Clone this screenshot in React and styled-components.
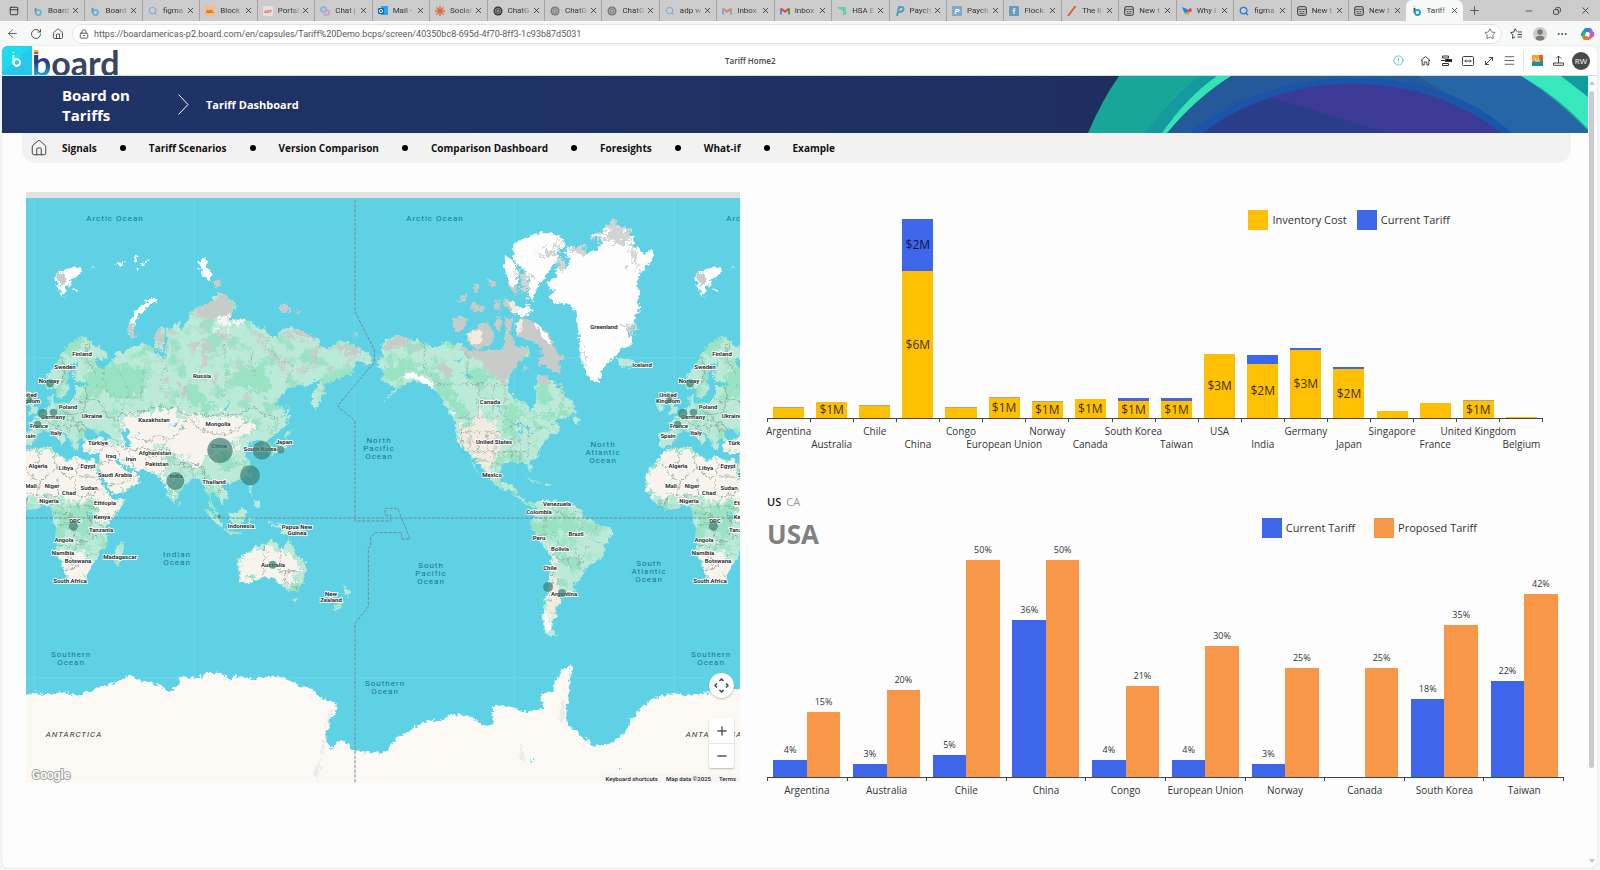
import styled, { createGlobalStyle, css } from "styled-components"
import {
  ArrowLeft, RotateCw, House, Star, LockKeyhole, Ellipsis, Menu, MoveDiagonal, Upload,
  Plus, Minus, X, Copy, CircleAlert, PanelTop, Newspaper, Search,
} from "lucide-react"

const yellow = "#ffc003"
const blue = "#3e66ea"
const orange = "#f89747"
const sea = "#5fd1e5"

const GlobalStyle = createGlobalStyle`
  * { box-sizing: border-box; }
  body {
    margin: 0;
    background: #f4f5f5;
    font-family: "Open Sans", "Noto Sans", sans-serif;
    color: #333;
  }
  button { font: inherit; color: inherit; background: none; border: 0; padding: 0; }
  a { color: inherit; text-decoration: none; }
  ul { list-style: none; margin: 0; padding: 0; }
`

const Page = styled.div`
  display: flex;
  flex-direction: column;
  min-height: 100vh;
`

/* browser chrome */

const TabStrip = styled.div`
  display: flex;
  align-items: stretch;
  height: 21px;
  background: #cccccc;
`

const TabActions = styled.div`
  width: 27px;
  display: flex;
  align-items: center;
  justify-content: center;
`

const TabList = styled.ul`
  flex: 1;
  display: flex;
  min-width: 0;
`

const Tab = styled.li`
  flex: 1 1 0;
  min-width: 0;
  display: flex;
  align-items: center;
  padding: 0 4px 0 5px;
  border-left: 1px solid ${props => props.$active ? "transparent" : "#a3a3a3"};
  background-clip: padding-box;
  font: 8px/12px Roboto, "Open Sans", sans-serif;
  color: #333;

  ${props => props.$active && css`
    background: #f7f8f8;
    border-radius: 6px 6px 0 0;
  `}

  & > svg { flex: none; }
`

const TabName = styled.span`
  flex: 1;
  margin: 0 2px 0 5px;
  white-space: nowrap;
  mask-image: linear-gradient(to right, #000 60%, rgba(0, 0, 0, 0.2));
`

const IconButton = styled.button`
  display: inline-flex;
  align-items: center;
  justify-content: center;
  width: ${props => props.$w || 22}px;
  height: 20px;
  flex: none;
  color: #444;
`

const CloseButton = styled.button`
  display: flex;
  color: #222;
`

const WindowControls = styled.div`
  width: 137px;
  display: flex;
  align-items: center;
  justify-content: space-between;
`

const WindowButtons = styled.div`
  display: flex;
  padding-right: 1px;
`

const Toolbar = styled.div`
  display: flex;
  align-items: center;
  height: 25px;
  padding-left: 1px;
  background: #f7f8f8;
`

const AddressBar = styled.div`
  flex: 1;
  display: flex;
  align-items: center;
  height: 20px;
  margin-left: 3px;
  border: 1px solid #dfe3e3;
  border-radius: 10px;
  background: #fff;
`

const AddressInput = styled.input`
  flex: 1;
  min-width: 0;
  border: 0;
  padding: 0;
  outline: none;
  background: none;
  font: 9px/14px Roboto, "Open Sans", sans-serif;
  color: #5a5a5a;
`

/* app frame */

const AppFrame = styled.div`
  flex: 1;
  display: flex;
  flex-direction: column;
  margin: 0 3px 2px 2px;
  border-radius: 6px;
  overflow: hidden;
  background: #fdfdfd;
  box-shadow: 0 0 1px #aaa;
`

const AppBar = styled.header`
  display: flex;
  align-items: center;
  justify-content: space-between;
  height: 30px;
  background: #fff;
  border-bottom: 1px solid #bfe6f5;
`

const Brand = styled.div`
  display: flex;
  align-items: flex-start;
  height: 29px;
  overflow: hidden;
`

const BrandName = styled.a`
  font: 700 34px/34px Lato, "Open Sans", sans-serif;
  color: #3a4560;
`

const BrandLetter = styled.span`
  color: transparent;
  background: linear-gradient(#e5b62e 24%, #d8443c 24% 29%, #fff 29% 32%, #273b82 32% 50%, #1fa3e0 80%);
  background-clip: text;
`

const ScreenName = styled.h1`
  margin: 0;
  font-size: 8px;
  font-weight: 600;
  line-height: 12px;
  color: #444;
`

const AppTools = styled.div`
  display: flex;
  align-items: center;
  padding-right: 7px;
`

const Divider = styled.span`
  width: 1px;
  height: 20px;
  margin: 0 3px;
  background: #e3e3e3;
`

const Avatar = styled.button`
  width: 18px;
  height: 18px;
  margin-left: 3px;
  border-radius: 50%;
  background: #484848;
  color: #fff;
  font-size: 8px;
  line-height: 18px;
`

const Scroller = styled.div`
  flex: 1;
  display: flex;
`

const Screen = styled.div`
  flex: 1;
  min-width: 0;
`

const Scrollbar = styled.div`
  width: 9px;
  display: flex;
  flex-direction: column;
  align-items: center;
  padding: 5px 2px 5px 0;
`

const ScrollThumb = styled.div`
  width: 5px;
  height: 677px;
  margin: 6px 0 auto;
  border-radius: 3px;
  background: #cbcbcb;
`

const Banner = styled.div`
  display: flex;
  align-items: center;
  height: 57px;
  padding-left: 60px;
  background: linear-gradient(to right, #1f3367, #1f3163 50%, #1b2a5a);
  color: #fff;
`

const BannerTitle = styled.h2`
  width: 116px;
  margin: 0;
  padding-right: 40px;
  font-size: 15px;
  line-height: 20px;
`

const BannerPage = styled.h3`
  margin: 0 0 0 17px;
  font-size: 11px;
  line-height: 16px;
`

const BannerArt = styled.svg`
  height: 57px;
  margin-left: auto;
`

const Nav = styled.nav`
  display: flex;
  align-items: center;
  height: 30px;
  margin: 0 17px 0 20px;
  padding-left: 8px;
  border-radius: 0 0 14px 14px;
  background: #f2f2f2;
`

const NavList = styled.ul`
  display: flex;
  align-items: center;
  gap: 23px;
  margin-left: 14px;
`

const NavItem = styled.li`
  display: flex;
  align-items: center;
  gap: 23px;
  font-size: 10px;
  font-weight: 700;
  line-height: 16px;
  color: #111;

  & + &::before {
    content: "";
    width: 6px;
    height: 6px;
    border-radius: 50%;
    background: #000;
  }
`

const Content = styled.main`
  display: grid;
  grid-template-columns: minmax(0, 714fr) minmax(0, 797fr);
  gap: 27px;
  padding: 29px 24px 20px 24px;
`

/* map */

const MapPanel = styled.section`
  position: relative;
  height: 591px;
  border-top: 6px solid #e2e2de;
  background: ${sea};
  overflow: hidden;
`

const MapSvg = styled.svg`
  display: block;
  width: 100%;
  height: 100%;
  font-family: Roboto, "Liberation Sans", sans-serif;
`

const PlaceText = styled.text`
  font-size: 6px;
  font-weight: 600;
  text-anchor: middle;
  fill: #222;
  stroke: rgba(255, 255, 255, 0.85);
  stroke-width: 2px;
  paint-order: stroke;
`

const OceanText = styled.text`
  font-size: 8px;
  text-anchor: middle;
  letter-spacing: 1px;
  fill: ${props => props.$land ? "#333" : "#17778f"};
`

const MapControls = styled.div`
  position: absolute;
  right: 6px;
  bottom: 15px;
  display: flex;
  flex-direction: column;
  gap: 20px;
`

const RoundControl = styled.button`
  width: 25px;
  height: 25px;
  display: flex;
  align-items: center;
  justify-content: center;
  border-radius: 50%;
  background: #fff;
  box-shadow: 0 1px 2px rgba(0, 0, 0, 0.25);
`

const ZoomControl = styled.div`
  width: 25px;
  border-radius: 2px;
  background: #fff;
  box-shadow: 0 1px 2px rgba(0, 0, 0, 0.25);
`

const ZoomButton = styled.button`
  width: 100%;
  height: 25px;
  display: flex;
  align-items: center;
  justify-content: center;
  color: #555;

  & + & { border-top: 1px solid #e6e6e6; }
`

const MapFooter = styled.div`
  position: absolute;
  right: 0;
  bottom: 0;
  display: flex;
  gap: 8px;
  padding: 0 4px;
  background: #f7f6f5;
  font: 500 6px/9px Roboto, sans-serif;
  color: #222;
`

const GoogleMark = styled.span`
  position: absolute;
  left: 6px;
  bottom: 0;
  font: 500 12px/16px Roboto, sans-serif;
  color: #fff;
  -webkit-text-stroke: 2px #a5a5a5;
  paint-order: stroke fill;
`

/* charts */

const Charts = styled.div`
  display: flex;
  flex-direction: column;
  gap: 43px;
`

const ChartSection = styled.section`
  padding-right: ${props => props.$right || 0}px;
`

const ChartArea = styled.div`
  display: grid;
  grid-template: 100% / 100%;
  height: ${props => props.$height}px;

  & > * { grid-area: 1 / 1; }
`

const Plot = styled.div`
  align-self: end;
  display: flex;
  align-items: flex-end;
  border-bottom: 1px solid #444;
`

const Column = styled.div`
  flex: 1;
  min-width: 0;
  display: flex;
  align-items: flex-end;
  justify-content: center;
`

const Stack = styled.div`
  width: 72%;
  display: flex;
  flex-direction: column;
`

const Segment = styled.div`
  display: flex;
  align-items: center;
  justify-content: center;
  background: ${props => props.$color};
  font-size: 12px;
  line-height: 14px;
  color: rgba(0, 0, 0, 0.8);
`

const Series = styled.div`
  width: 42%;
  display: flex;
  flex-direction: column;
  align-items: center;
  font-size: 9px;
  line-height: 12px;
  color: #333;
`

const Bar = styled.div`
  width: 100%;
  margin-top: 4px;
  background: ${props => props.$color};
`

const Axis = styled.div`
  display: flex;
  border-right: 1px solid #444;
  height: 3px;
`

const Tick = styled.span`
  flex: 1;
  border-left: 1px solid #444;
`

const AxisLabels = styled.div`
  display: flex;
  align-items: flex-start;
  padding-top: 3px;
`

const AxisLabel = styled.span`
  flex: 1;
  min-width: 0;
  display: flex;
  justify-content: center;
  white-space: nowrap;
  font-size: 10px;
  line-height: 13px;
  color: #333;

  ${props => props.$stagger && css`
    &:nth-child(even) { margin-top: 13px; }
  `}
`

const Legend = styled.div`
  justify-self: end;
  align-self: start;
  display: flex;
  gap: ${props => props.$gap}px;
  margin-top: ${props => props.$top}px;
  margin-right: ${props => props.$right}px;
`

const LegendItem = styled.span`
  display: flex;
  align-items: center;
  gap: 4px;
  font-size: 11px;
  line-height: 20px;

  &::before {
    content: "";
    width: 20px;
    height: 20px;
    background: ${props => props.$color};
  }
`

const ChartHead = styled.div`
  align-self: start;
  justify-self: start;
`

const Selector = styled.div`
  display: flex;
  gap: 5px;
`

const SelectorButton = styled.button`
  font-size: 11px;
  line-height: 16px;
  font-weight: ${props => props.$active ? 600 : 400};
  color: ${props => props.$active ? "#222" : "#999"};
`

const Country = styled.h2`
  margin: 6px 0 0;
  font-size: 26px;
  line-height: 36px;
  color: #808080;
`

const tabs = [
  ["Board", "board"], ["Board", "board"], ["figma", "search"], ["Block", "adl"], ["Portal", "adp"],
  ["Chat |", "copilot"], ["Mail -", "outlook"], ["Social", "burst"], ["ChatG", "gpt"], ["ChatG", "gpt2"],
  ["ChatG", "gpt2"], ["adp w", "search"], ["Inbox", "gmail2"], ["Inbox", "gmail"], ["HSA E", "hsa"],
  ["Paych", "p"], ["Paych", "p2"], ["Flock:", "flock"], ["The li", "slash"], ["New t", "news"],
  ["Why I", "bird"], ["figma", "search2"], ["New t", "news"], ["New t", "news"], ["Tariff", "board2"],
]

const TileIcon = ({ bg, fg, children, italic }) => (
  <svg width="10" height="10" viewBox="0 0 10 10">
    <rect width="10" height="10" rx="1" fill={bg} />
    <text x="5" y={children.length > 1 ? 7 : 8} textAnchor="middle" fontSize={children.length > 1 ? 4 : 8} fontWeight="700" fontStyle={italic ? "italic" : "normal"} fill={fg}>{children}</text>
  </svg>
)

const Favicon = ({ kind }) => {
  const faded = ["board", "copilot", "gpt2", "gmail2"].includes(kind) ? 0.55 : 1
  const svg = (children) => <svg width="10" height="10" viewBox="0 0 10 10" opacity={faded}>{children}</svg>

  switch (kind) {
    case "board":
    case "board2":
      return svg(<>
        <path d="M2.5 2v5" stroke="#24459c" strokeWidth="1.8" />
        <circle cx="5.400" cy="6.500" r="2.600" fill="none" stroke="#149fdc" strokeWidth="1.800" />
        <path d="M1.600 .800h1.800" stroke="#f3b23c" strokeWidth="1" />
      </>)
    case "search": return <Search size={10} color="#6aa6d8" />
    case "search2": return <Search size={10} color="#1d7fd6" strokeWidth={3} />
    case "adl": return <TileIcon bg="#fdba74" fg="#8a5a20">ADL</TileIcon>
    case "adp": return <TileIcon bg="#e8dede" fg="#e0584c" italic>ADP</TileIcon>
    case "copilot": return svg(<>
      <circle cx="3.5" cy="3.5" r="2.5" fill="none" stroke="#3bb0e0" strokeWidth="2" />
      <circle cx="6.5" cy="6.5" r="2.5" fill="none" stroke="#e07ac0" strokeWidth="2" />
    </>)
    case "outlook": return svg(<>
      <rect x="3" y="0" width="7" height="9" fill="#28a8ea" />
      <rect x="0" y="2" width="6" height="6" rx="1" fill="#0f66b8" />
      <circle cx="3" cy="5" r="1.6" fill="none" stroke="#fff" />
    </>)
    case "burst": return svg(<path d="M5 0v10M0 5h10M1.5 1.5l7 7M8.5 1.5l-7 7" stroke="#e0683c" strokeWidth="1.4" />)
    case "gpt":
    case "gpt2": return svg(<>
      <circle cx="5" cy="5" r="4.5" fill="#333" />
      <path d="M5 2l2.6 1.5v3L5 8 2.4 6.5v-3zM5 2v6M2.4 3.5l5.2 3M7.6 3.5l-5.2 3" fill="none" stroke="#bbb" strokeWidth=".6" />
    </>)
    case "gmail":
    case "gmail2": return svg(<>
      <path d="M1 8.500V2.500" stroke="#4285f4" strokeWidth="1.900" />
      <path d="M9 8.500V2.500" stroke="#34a853" strokeWidth="1.900" />
      <path d="M1 2.500l4 3.200 4-3.200" fill="none" stroke="#ea4335" strokeWidth="2" />
    </>)
    case "hsa": return svg(<path d="M0 1h9v8H6V5L2 3z" fill="#63d3a6" />)
    case "p": return svg(<path d="M2 10L4 1h3q2 .5 1.500 2.600T5 6H3" fill="none" stroke="#4f9fbd" strokeWidth="2" />)
    case "p2": return <TileIcon bg="#7fa9cc" fg="#fff" italic>P</TileIcon>
    case "flock": return <TileIcon bg="#6b9abd" fg="#e6f2fa">f</TileIcon>
    case "slash": return svg(<path d="M1 10L8.500 0" stroke="#e5503f" strokeWidth="1.700" />)
    case "bird": return svg(<>
      <path d="M0 1l5 2 1 4-4-1z" fill="#1887d8" />
      <path d="M5 4l4-2 1 3-4 2z" fill="#e93f63" />
      <path d="M4 6h4l-2 4z" fill="#f0a52a" />
      <path d="M2 6l3 0-1 3z" fill="#3bb36a" />
    </>)
    default: return svg(<>
      <rect x=".7" y=".7" width="8.600" height="8.600" rx="1.500" fill="none" stroke="#333" />
      <path d="M1 3.300h8M2.500 5.500h2M5.500 5.500h2M2.500 7.300h5" stroke="#333" strokeWidth=".8" />
    </>)
  }
}

const Browser = () => (
  <>
    <TabStrip>
      <TabActions><PanelTop size={10} color="#222" /></TabActions>
      <TabList>
        {tabs.map(([name, kind], i) => (
          <Tab key={i} $active={i === tabs.length - 1}>
            <Favicon kind={kind} />
            <TabName>{name}</TabName>
            <CloseButton aria-label="Close tab"><X size={9} /></CloseButton>
          </Tab>
        ))}
      </TabList>
      <WindowControls>
        <IconButton aria-label="New tab"><Plus size={13} strokeWidth={1.5} /></IconButton>
        <WindowButtons>
          <IconButton $w={28} aria-label="Minimize"><Minus size={10} /></IconButton>
          <IconButton $w={28} aria-label="Restore"><Copy size={8} transform="scale(-1 1)" strokeWidth={3} /></IconButton>
          <IconButton $w={28} aria-label="Close"><X size={11} /></IconButton>
        </WindowButtons>
      </WindowControls>
    </TabStrip>

    <Toolbar>
      <IconButton $w={23} aria-label="Back"><ArrowLeft size={13} strokeWidth={1.5} /></IconButton>
      <IconButton $w={23} aria-label="Refresh"><RotateCw size={12} strokeWidth={1.800} /></IconButton>
      <IconButton $w={22} aria-label="Home"><House size={12} strokeWidth={1.800} /></IconButton>
      <AddressBar>
        <IconButton $w={21} aria-label="Site information"><LockKeyhole size={10} /></IconButton>
        <AddressInput
          aria-label="Address"
          defaultValue="https://boardamericas-p2.board.com/en/capsules/Tariff%20Demo.bcps/screen/40350bc8-695d-4f70-8ff3-1c93b87d5031"
        />
        <IconButton aria-label="Add to favorites"><Star size={12} strokeWidth={1.500} /></IconButton>
      </AddressBar>
      <IconButton $w={28} aria-label="Favorites">
        <svg width="12" height="12" viewBox="0 0 12 12" fill="none" stroke="#444">
          <path d="M7 3.600L5 .800 3.800 4 .700 4.500l2.200 2.300-.4 3.500L5 9M8 4h4M7.500 6.500H12M7.500 9H12" />
        </svg>
      </IconButton>
      <IconButton $w={20} aria-label="Profile">
        <svg width="14" height="14" viewBox="0 0 14 14">
          <circle cx="7" cy="7" r="7" fill="#cfcdca" />
          <circle cx="7" cy="5" r="2.800" fill="#7d7975" />
          <path d="M2.500 12Q3 8.800 7 8.800t4.500 3.200Q7 15.500 2.500 12z" fill="#7d7975" />
        </svg>
      </IconButton>
      <IconButton $w={24} aria-label="Settings"><Ellipsis size={12} /></IconButton>
      <IconButton $w={26} aria-label="Copilot">
        <svg width="15" height="14" viewBox="0 0 15 14">
          <path d="M5 1h5l2 5H8L6 9H1Q0 7 2 5z" fill="#1b8fd8" />
          <path d="M10 1q2 0 3 4h1q1 2-.5 5H9l1-4z" fill="#c15bd0" />
          <path d="M4 13h5l4-3H8L6 8H2q0 4 2 5z" fill="#f0713c" />
          <path d="M1 9l3-5 2 3-1 3z" fill="#4bb457" />
          <path d="M6 5h3l-1 4H5z" fill="#fff" />
        </svg>
      </IconButton>
    </Toolbar>
  </>
)

const Header = () => (
  <AppBar>
    <Brand>
      <svg width="30" height="30" viewBox="0 0 30 30">
        <path d="M0 0h30v30H0z" fill="#27c8ea" />
        <path d="M0 0h30L0 26z" fill="#1fdcec" />
        <path d="M11.500 9v10" stroke="#fff" strokeWidth="2" />
        <circle cx="14.800" cy="16.500" r="3.200" fill="none" stroke="#fff" strokeWidth="2" />
        <path d="M10.500 6.500h2" stroke="#fff" strokeWidth="1" />
      </svg>
      <BrandName href="#"><BrandLetter>b</BrandLetter>oard</BrandName>
    </Brand>
    <ScreenName>Tariff Home2</ScreenName>
    <AppTools>
      <IconButton $w={34} aria-label="Alerts"><CircleAlert size={11} color="#41b8dc" strokeWidth={1.800} /></IconButton>
      <IconButton $w={21} aria-label="Home">
        <svg width="11" height="11" viewBox="0 0 11 11" fill="none" stroke="#444">
          <path d="M1 5.500l4.500-4 4.500 4H8.800v4.500H6.800V7H4.200v3H2.200V5.500z" />
        </svg>
      </IconButton>
      <IconButton $w={21} aria-label="Layers">
        <svg width="11" height="11" viewBox="0 0 11 11" fill="none" stroke="#333">
          <path d="M1.500 1h6v2h-6zM1.500 8.500h6v2h-6zM0 5.500h5" />
          <path d="M4.500 4.500H11v2H4.500z" fill="#111" />
        </svg>
      </IconButton>
      <IconButton $w={21} aria-label="Fit width">
        <svg width="12" height="10" viewBox="0 0 12 10" fill="none" stroke="#444">
          <rect x=".5" y=".5" width="11" height="9" rx="1" />
          <path d="M3 5h6M4.200 3.500L2.700 5l1.500 1.500M7.800 3.500L9.300 5 7.800 6.500" />
        </svg>
      </IconButton>
      <IconButton $w={21} aria-label="Expand"><MoveDiagonal size={12} /></IconButton>
      <IconButton $w={21} aria-label="Menu"><Menu size={13} strokeWidth={1.500} /></IconButton>
      <Divider />
      <IconButton $w={21} aria-label="Assistant">
        <svg width="11" height="11" viewBox="0 0 11 11">
          <path d="M0 0h11v11H0z" fill="#f7a531" />
          <path d="M7 0h4v8H7z" fill="#ee5c35" />
          <path d="M0 7q5-3 11-1v5H0z" fill="#218f8f" />
          <path d="M3 4h1M6 4h1M3 6h5" stroke="#fff" />
        </svg>
      </IconButton>
      <IconButton $w={21} aria-label="Upload">
        <svg width="11" height="11" viewBox="0 0 11 11" fill="none" stroke="#444">
          <path d="M5.500 8V1M3 3.500L5.500 1 8 3.500M.5 8v2.300h10V8z" />
        </svg>
      </IconButton>
      <Avatar aria-label="Account">RW</Avatar>
    </AppTools>
  </AppBar>
)

const navItems = ["Signals", "Tariff Scenarios", "Version Comparison", "Comparison Dashboard", "Foresights", "What-if", "Example"]

// coastlines are drawn at three units to a pixel, one world is 1920 units wide
const eastLand = [
  // Eurasia
  "M75 600 80 575 105 545 120 515 135 490 155 470 185 455 205 462 215 475 240 485 262 500 262 520 240 525 222 518 228 535 240 552 252 558 262 540 278 522 290 520 285 505 295 495 310 505 322 490 345 485 365 475 385 480 402 500 418 515 428 520 440 512 405 485 405 450 415 425 430 425 435 445 432 480 442 490 440 430 450 438 460 420 480 410 482 440 492 425 500 405 508 385 530 370 570 350 590 330 600 320 615 335 640 345 650 360 640 380 622 400 640 405 660 400 690 410 715 430 735 430 738 445 770 455 785 430 810 425 840 435 870 450 895 460 900 485 930 490 955 470 985 470 1010 485 1040 505 1058 520 1055 535 1040 543 1025 530 1005 530 1000 550 1000 565 965 575 940 588 915 590 910 600 915 620 900 650 885 678 875 650 880 620 895 600 910 578 880 590 865 603 840 600 805 605 780 640 765 660 790 665 800 700 795 720 775 745 750 755 742 765 748 778 755 792 748 803 738 800 728 775 715 765 695 775 680 775 690 790 672 795 675 810 690 830 690 850 680 870 660 885 635 893 605 892 602 905 622 920 625 935 605 953 595 940 580 925 572 922 570 935 580 965 597 992 588 988 570 962 566 930 555 915 548 895 540 880 525 875 505 890 490 905 478 925 470 942 460 955 448 940 440 915 437 895 425 888 412 875 395 860 360 857 330 850 305 838 290 820 284 820 300 842 315 855 330 862 345 860 360 875 355 890 340 905 310 920 280 930 272 920 260 895 245 865 230 840 238 832 240 805 225 807 200 805 188 795 192 768 185 755 178 760 172 770 178 785 170 795 160 785 150 765 142 748 125 737 115 728 112 735 125 748 140 760 132 770 125 782 118 765 100 750 85 735 70 738 55 745 45 757 40 770 25 785 5 790-4 780-2 745 30 742 35 725 20 712 35 705 55 695 70 680 80 672 90 665 88 650 88 630 100 625 100 645 105 655 130 655 155 650 165 630 165 605 190 605 210 597 200 592 165 590 160 565 170 545 178 528 160 535 145 560 138 585 150 605 140 630 125 640 112 635 108 612 90 612z",
  // Britain, Ireland
  "M20 615 35 622 30 640 45 660 55 680 25 688 35 670 20 650 10 632z M-8 655 10 650 10 675-8 680z",
  // Sakhalin, Japan, Taiwan, Philippines
  "M803 655 809 700 806 718 799 690z M800 740 818 733 806 750 790 755z M802 760 802 788 778 800 756 810 748 815 765 792 790 775z M692 860 697 866 690 882 686 874z M688 900 697 905 694 925 700 935 690 925z M705 945 718 952 715 968 702 962z",
  // Indonesia, New Guinea, Sri Lanka
  "M555 970 575 980 600 1005 610 1030 590 1018 570 995z M605 1035 640 1038 668 1048 630 1046z M625 990 650 980 670 965 680 980 670 1015 640 1018 628 1005z M684 1000 704 998 690 1008 696 1030 684 1022z M745 1005 762 1018 800 1018 840 1035 862 1052 830 1050 790 1048 775 1030 755 1022z M472 948 480 960 474 967z",
  // Australia, Tasmania, New Zealand
  "M650 1125 680 1105 700 1090 725 1078 735 1082 745 1065 770 1070 775 1085 790 1095 800 1075 805 1060 815 1080 825 1105 850 1125 860 1150 850 1190 835 1218 800 1215 780 1198 765 1190 765 1182 740 1178 710 1185 680 1195 662 1195 655 1160z M820 1240 834 1240 828 1256z M972 1200 993 1220 985 1237 974 1225z M972 1245 960 1265 945 1280 935 1272 955 1250z",
  // Africa, Madagascar
  "M10 797 35 790 95 787 102 800 130 815 145 827 160 812 180 822 210 825 222 825 228 840 235 865 245 895 255 915 275 940 283 945 318 940 310 960 290 985 265 1010 255 1030 260 1050 262 1080 235 1100 232 1125 215 1145 205 1170 185 1188 155 1192 140 1185 135 1165 122 1135 118 1110 108 1090 110 1060 110 1030 95 1010 97 985 90 970 70 960 50 970 10 972-20 950-45 915-45 880-30 850 0 820z",
  "M310 1065 312 1090 295 1135 282 1138 278 1115 290 1085z",
]

const dryLand = [
  "M10 797 35 790 95 787 102 800 130 815 145 827 160 812 180 822 222 825 235 865 255 915 283 945 318 940 310 960 290 985 265 1010 240 1000 225 965 235 940 180 945 120 938 60 935 0 940-45 915-45 880-30 850 0 820z",
  "M118 1100 165 1098 190 1110 215 1145 205 1170 185 1188 155 1192 140 1185 122 1135z",
  "M300 700 340 685 380 690 420 668 470 675 485 710 530 690 580 695 640 690 700 720 705 740 650 765 640 800 580 800 545 840 500 830 450 795 400 770 440 830 430 880 410 872 360 857 330 850 290 820 300 842 330 862 360 875 340 905 280 930 260 895 230 840 240 805 190 800 192 772 260 765 320 790z",
  "M575 405 620 390 665 400 650 418 600 428z",
  "M652 1125 700 1092 745 1085 790 1100 830 1125 835 1160 815 1200 780 1198 740 1178 662 1195z",
  "M440 890 452 930 468 935 462 905z",
]

const lushLand = [
  "M200 560 260 530 330 540 375 550 370 640 300 645 230 610 195 620z",
  "M110 985 150 965 200 975 225 1000 205 1060 160 1040 115 1030z",
  "M540 870 565 850 570 890 560 920z",
  "M500 600 560 640 600 665 560 680 510 655z",
  "M625 560 720 540 760 600 740 630 640 600z",
  "M740 740 770 700 790 700 775 745z",
  "M120 530 150 480 200 465 150 510z",
]

const tundra = [
  "M508 385 530 370 570 350 600 320 650 360 640 380 600 392 560 405z",
  "M535 470 560 462 575 490 560 510 540 498z", "M600 455 635 440 635 465 610 470z",
  "M405 450 415 425 430 425 432 480 420 490z", "M725 450 742 450 732 510z",
  "M785 430 840 435 895 460 860 465 800 445z", "M940 485 985 470 1040 510 1000 510z",
  "M780 515 810 530 800 545z M790 560 812 575 800 582z", "M160 470 200 458 195 470z M425 600 445 600 440 615z",
]

const arcticIslands = "M105 265 125 260 150 250 165 245 188 255 170 275 150 285 155 300 135 310 130 340 120 320 110 300z M160 305 172 318 160 320z M214 246 222 250 215 252z M288 238 316 228 300 248z M338 228 352 206 356 212 345 235z M360 240 372 228 392 222 388 230z M345 250 352 244 358 252z M400 338 410 348 385 365 360 385 345 410 340 440 350 455 335 458 322 440 330 410 345 380 370 355z M540 225 555 215 563 250 575 265 570 290 550 275 545 255 535 245z"
const arcticGrey = "M105 262 130 265 140 285 120 305z M322 440 332 410 342 420 340 440 350 455 335 458z M580 292 595 278 607 300 585 308z M778 362 800 355 815 375 790 385z M825 375 848 380 832 384z M998 448 1016 450 1006 455z"

const americas = [
  "M25 520 45 515 30 490 45 465 80 450 110 460 130 465 160 470 190 490 235 465 245 480 270 475 300 500 330 495 360 500 400 490 410 450 425 450 425 480 450 490 475 480 478 510 450 530 425 560 410 600 430 640 465 650 480 675 492 670 500 640 495 610 505 590 500 570 530 572 550 590 560 610 575 595 580 630 610 650 618 680 590 700 560 705 540 720 560 712 575 740 545 745 530 760 515 780 505 810 480 830 487 858 478 860 468 835 440 832 400 835 388 860 395 890 415 898 430 898 440 915 450 935 470 952 495 955 500 950 515 940 545 945 600 950 635 975 640 1000 680 1015 725 1030 727 1050 705 1085 700 1115 670 1130 650 1150 635 1175 620 1197 605 1195 615 1215 590 1235 568 1240 572 1255 555 1275 560 1290 545 1310 550 1335 565 1350 540 1355 520 1335 515 1300 522 1260 535 1200 540 1150 542 1110 520 1085 495 1050 480 1020 490 995 485 985 500 965 470 960 440 935 415 915 380 905 362 885 350 870 335 845 310 820 278 792 262 765 255 730 255 705 240 690 225 660 205 625 175 600 145 590 115 590 90 605 60 635 40 648 80 610 60 600 35 590 40 560 25 545z",
  "M298 818 325 858 328 872 305 835z M465 880 500 887 518 895 490 890z M524 893 548 900 530 902z M605 700 615 690 632 710 615 715z M420 526 425 540 412 535z M740 525 752 520 790 525 795 540 770 550 745 543z",
  "M268 395 290 402 285 420 262 430z",
]
const americasDry = [
  "M262 730 300 720 330 670 350 700 385 730 390 790 380 830 350 840 365 870 355 868 310 820 278 790z",
  "M520 1080 545 1095 565 1120 550 1170 575 1230 568 1260 545 1310 522 1320 535 1200 540 1120z",
]
const americasLush = [
  "M485 1020 520 1000 600 985 640 1010 620 1050 560 1050 500 1055z",
  "M160 530 200 560 240 610 290 690 300 720 250 690 210 620z",
  "M600 665 615 680 560 700 430 700 400 640 470 690z",
  "M520 1240 530 1200 532 1280z M30 560 110 520 150 560 60 590z",
]
const americasGrey = [
  "M270 490 330 495 400 495 410 450 425 450 440 490 478 490 450 530 420 570 400 600 380 575 340 550 340 525 290 520z",
  "M30 490 80 452 130 465 110 480 50 495z M110 495 160 480 150 495z M190 540 230 535 250 575 235 575z M500 572 530 572 545 598 510 600z",
  "M250 395 290 402 288 420 265 445 248 430z M285 450 330 420 355 410 370 445 370 475 330 492 300 482z M375 405 395 405 392 440 375 430z M405 400 430 402 420 445 405 470z M440 405 455 400 490 410 520 430 550 470 555 495 585 520 565 530 570 565 545 560 520 540 500 535 520 510 510 480 470 465 440 450z",
  "M260 352 275 332 297 328 285 348z M300 372 310 345 322 360 350 365 335 385z M355 275 380 295 375 305 355 300z M312 298 328 295 322 325 312 318z M370 350 392 348 392 375 370 370z M400 340 425 350 425 385 402 360z M385 385 392 400 380 395z M455 535 478 550 460 555z M505 495 515 500 508 508z M410 290 440 300 450 330 425 320z M620 460 640 470 630 480z",
]
const americasIce = [
  "M430 180 460 160 500 145 550 145 580 160 585 185 560 200 570 215 540 250 520 285 500 310 492 352 476 340 480 300 470 260 440 240 430 210z M405 215 430 225 445 260 440 300 425 305 410 270 400 240z M430 368 480 362 490 380 460 392 428 385z",
  "M700 175 680 190 650 205 620 190 595 185 585 205 600 225 590 250 555 250 560 280 535 290 530 305 555 320 535 335 550 355 590 355 610 365 620 400 625 440 630 480 632 520 645 560 660 585 682 597 688 580 697 555 715 530 735 520 750 495 775 485 790 470 775 450 770 430 795 420 800 385 815 370 800 350 808 320 800 290 815 255 840 235 853 210 845 195 820 205 805 190 790 180 790 160 765 130 735 118 705 125 695 140 665 150 690 160z",
]
const iceShade = "M495 225 540 190 575 165 585 185 540 210z M455 245 475 255 480 300 470 345 455 310z M440 250 450 290 435 280z M705 125 735 118 765 130 790 160 770 180 720 170z M665 150 690 145 720 165 700 175z M590 185 650 190 640 210 600 205z M780 190 800 200 800 250 785 230z M560 220 590 225 590 250 560 250z M770 430 795 420 790 460z M632 490 645 500 650 550 636 520z"

const antarctica = "M0 1535 45 1525 85 1528 130 1522 175 1532 230 1508 270 1500 330 1470 370 1490 418 1500 450 1520 478 1500 480 1475 500 1478 550 1475 560 1460 575 1468 600 1463 625 1482 650 1472 690 1482 735 1478 770 1472 820 1490 845 1510 870 1508 905 1540 950 1555 948 1588 925 1605 930 1625 915 1640 918 1670 935 1688 955 1668 985 1675 1000 1695 1045 1702 1095 1702 1125 1665 1170 1635 1215 1610 1285 1600 1290 1587 1350 1592 1385 1618 1420 1618 1415 1565 1450 1560 1490 1575 1530 1580 1570 1572 1560 1530 1600 1515 1605 1490 1625 1455 1655 1440 1650 1480 1640 1560 1640 1615 1670 1640 1725 1685 1760 1682 1820 1642 1830 1605 1870 1560 1910 1535 1960 1525 2000 1530 2100 1522 2200 1505 2200 1850 0 1850z"

const inlandWater = "M195 742 205 728 222 735 232 750 250 735 262 745 285 765 260 762 230 758 205 766 192 755z M303 745 325 728 332 735 322 750 332 770 330 788 318 785 312 765z M425 520 432 485 436 485 434 518z M612 675 628 645 630 655 618 678z M440 725 475 715 470 722z M205 985 220 990 212 1000z M348 745 358 742 354 752z"

const eastBorders = "M205 470 200 500 210 540 230 570 M125 515 135 560 125 600 M195 600 200 640 190 680 160 690 130 685 120 660 M60 700 90 715 110 725 140 720 150 740 M150 690 165 710 190 715 200 735 M110 670 105 695 125 705 160 705 M200 640 240 650 255 690 290 705 M165 640 195 655 M150 725 175 720 180 745 M165 710 175 735 200 735 M290 705 300 690 360 680 420 665 475 672 500 692 530 685 570 692 620 688 660 690 700 665 735 690 770 700 M505 700 545 735 610 750 650 735 680 705 M285 765 310 790 330 795 M330 795 370 790 420 800 440 770 480 740 500 700 M335 755 380 770 410 755 440 760 M240 800 260 780 290 790 300 820 M330 800 345 850 M380 850 380 820 440 800 M420 870 450 830 470 840 520 850 545 845 M440 790 480 835 545 840 555 880 570 895 M575 880 590 900 600 930 M510 855 520 880 M230 840 280 825 M265 900 330 890 345 870 M50 790 55 830 20 850-10 830 M100 800 110 850 60 890 20 860 M110 850 150 880 170 870 175 825 M175 875 235 877 M170 870 165 920 M60 890 50 930 20 925 M165 920 180 935 225 925 250 905 M110 880 120 930 60 935 M90 960 120 940 M110 960 140 970 190 960 225 970 M100 985 150 985 150 1010 115 1025 M200 975 215 1010 205 1040 235 1060 M160 1030 165 1060 200 1070 230 1050 M112 1080 160 1085 200 1070 M160 1090 150 1120 160 1150 125 1155 M160 1150 190 1130 205 1110 230 1105 M225 970 230 1010 255 1030 M733 1080v100 M780 1090v70h75 M797 1160v35l40 20 M0 940 0 970 M20 935 15 970 M60 935 70 960"
const tileSplits = "M375 540 360 640 M250 560 260 620 M610 480 620 560 610 640 M700 500 690 540 720 580 M540 560 500 600 480 660 M820 540 800 590 M900 500 850 570 M640 830 620 860 600 850 M650 800 640 830 680 850 M560 810 600 840 M735 480 780 530 820 540 M300 560 330 620 300 680 M440 540 420 600 450 660 M230 600 290 640 370 640"
const westBorders = "M163 470v90l50 40 M258 698h145l30 15 60 20 30-10 20 20 M290 500v100 M325 600v98 M370 600v98 M190 598h220 M405 600v98 M275 725v60 M300 710v90 M325 740v60 M350 740v60 M375 740v90 M400 710v120 M425 710v110 M450 760v70 M475 750v80 M262 740h130 M262 770h200 M275 800h200 M300 820l60 10 30 10 M540 950l10 25 30 15 60-10 M490 995l40 10-10 40 M500 1055l50-10 20 40 50 10 10 60 M545 1100l25 25 50-10 M550 1150l-10 100 M610 1170l-20-60 M640 1010l-20 60 40 20 M680 1020l-20 40 45 20 M650 1090l-20 50 M570 590l10 60"

const places = [
  [62, 171, "Finland"], [45, 184, "Sweden"], [29, 198, "Norway"], [48, 224, "Poland"], [33, 234, "Germany"],
  [72, 233, "Ukraine"], [19, 243, "France"], [36, 250, "Italy"], [8, 253, "Spain"], [78, 260, "Türkiye"],
  [182, 193, "Russia"], [134, 237, "Kazakhstan"], [198, 241, "Mongolia"], [199, 263, "China"], [240, 266, "South Korea"],
  [264, 259, "Japan"], [135, 270, "Afghanistan"], [137, 281, "Pakistan"], [91, 273, "Iraq"], [111, 276, "Iran"],
  [18, 283, "Algeria"], [46, 285, "Libya"], [68, 283, "Egypt"], [95, 292, "Saudi Arabia"], [156, 293, "India"],
  [194, 299, "Thailand"], [11, 303, "Mali"], [32, 303, "Niger"], [69, 305, "Sudan"], [49, 310, "Chad"],
  [29, 318, "Nigeria"], [85, 320, "Ethiopia"], [82, 334, "Kenya"], [55, 338, "DRC"], [81, 347, "Tanzania"],
  [44, 357, "Angola"], [43, 370, "Namibia"], [58, 378, "Botswana"], [100, 374, "Madagascar"], [50, 398, "South Africa"],
  [221, 343, "Indonesia"], [277, 344, "Papua New"], [277, 350, "Guinea"], [253, 382, "Australia"],
  [311, 411, "New"], [311, 417, "Zealand"], [8, 212, "United"], [8, 218, "Kingdom"],
]

const westPlaces = [
  [584, 144, "Greenland"], [622, 182, "Iceland"], [470, 219, "Canada"], [474, 259, "United States"], [472, 292, "Mexico"],
  [537, 321, "Venezuela"], [519, 329, "Colombia"], [556, 351, "Brazil"], [519, 355, "Peru"], [540, 366, "Bolivia"],
  [530, 385, "Chile"], [544, 411, "Argentina"],
]

const oceans = [
  [95, 36, ["Arctic Ocean"]], [415, 36, ["Arctic Ocean"]], [735, 36, ["Arctic Ocean"]],
  [359, 258, ["North", "Pacific", "Ocean"]], [583, 262, ["North", "Atlantic", "Ocean"]],
  [157, 372, ["Indian", "Ocean"]], [411, 383, ["South", "Pacific", "Ocean"]], [629, 381, ["South", "Atlantic", "Ocean"]],
  [51, 472, ["Southern", "Ocean"]], [365, 501, ["Southern", "Ocean"]], [691, 472, ["Southern", "Ocean"]],
]

const bubbles = [
  [600, 796, 38], [726, 796, 28], [690, 871, 30], [466, 888, 27], [782, 794, 11], [90, 595, 12], [100, 682, 11],
  [68, 686, 14], [53, 718, 11], [28, 645, 9], [160, 1023, 14], [598, 994, 5], [758, 1139, 12],
]

const Shapes = ({ list, fill }) => list.map(d => <path key={d} d={d} fill={fill} />)

const WorldMap = () => (
  <MapPanel>
    <MapSvg viewBox="6 13 714 585" preserveAspectRatio="xMinYMin slice" role="img" aria-label="World map of tariff exposure">
      <defs>
        <filter id="coast" x="-5%" y="-5%" width="110%" height="110%" colorInterpolationFilters="sRGB">
          <feTurbulence type="fractalNoise" baseFrequency="0.08" numOctaves="3" seed="4" />
          <feDisplacementMap in="SourceGraphic" scale="22" xChannelSelector="R" yChannelSelector="G" />
        </filter>
        <filter id="patches" x="-5%" y="-5%" width="110%" height="110%" colorInterpolationFilters="sRGB">
          <feTurbulence type="fractalNoise" baseFrequency="0.06" numOctaves="4" seed="9" />
          <feDisplacementMap in="SourceGraphic" scale="70" xChannelSelector="R" yChannelSelector="G" />
        </filter>
        <filter id="forest" colorInterpolationFilters="sRGB">
          <feTurbulence type="fractalNoise" baseFrequency="0.02" numOctaves="5" seed="12" />
          <feColorMatrix values="0 0 0 0 0.6  0 0 0 0 0.885  0 0 0 0 0.765  7 0 0 0 -3.7" />
        </filter>
        <filter id="frost" colorInterpolationFilters="sRGB">
          <feTurbulence type="fractalNoise" baseFrequency="0.03" numOctaves="5" seed="21" />
          <feColorMatrix values="0 0 0 0 0.79  0 0 0 0 0.81  0 0 0 0 0.79  0 10 0 0 -6.3" />
        </filter>
        <clipPath id="eastClip">{eastLand.map(d => <path key={d} d={d} />)}</clipPath>
        <clipPath id="westClip"><path d={americas[0]} /></clipPath>
        <g id="east">
          <g filter="url(#coast)">
            <Shapes list={eastLand} fill="#bcead8" />
            <path d={arcticIslands} fill="#fff" />
            <path d={arcticGrey} fill="#c9ccca" />
            <g clipPath="url(#eastClip)">
              <rect x="-60" y="300" width="1130" height="1000" filter="url(#forest)" />
              <rect x="450" y="380" width="620" height="240" filter="url(#frost)" />
              <g filter="url(#patches)">
                <Shapes list={lushLand} fill="#99e2c2" />
                <Shapes list={dryLand} fill="#f8f3ed" />
                <Shapes list={tundra} fill="#c8ccc9" />
              </g>
            </g>
            <path d={inlandWater} fill={sea} />
            <path d={eastBorders} fill="none" stroke="#7f918c" strokeWidth="2" />
            <path d={tileSplits} fill="none" stroke="#83aa9c" strokeWidth="2" strokeDasharray="6 4" />
          </g>
        </g>
        <g id="bubbles">
          {bubbles.map(([x, y, r]) => (
            <circle key={x} cx={x / 3} cy={y / 3} r={r / 3} fill="#3a7d72" fillOpacity="0.7" />
          ))}
        </g>
      </defs>

      <g transform="scale(.33333)">
        <path d="M43 0v1800M523 0v1800M1003 0v1800M1483 0v1800M1963 0v1800M0 519h2200M0 1479h2200" stroke="#6dd6e8" strokeWidth="3" />
        <use href="#east" />
        <use href="#east" x="1920" />
        <g transform="translate(1050)">
          <g filter="url(#coast)">
            <Shapes list={americas} fill="#bcead8" />
            <g clipPath="url(#westClip)">
              <rect x="0" y="440" width="740" height="940" filter="url(#forest)" />
              <g filter="url(#patches)">
                <Shapes list={americasLush} fill="#99e2c2" />
                <Shapes list={americasDry} fill="#f3ebdf" />
              </g>
            </g>
            <Shapes list={americasGrey} fill="#c8ccc9" />
            <Shapes list={americasIce} fill="#fdfdfd" />
            <g filter="url(#patches)"><path d={iceShade} fill="#d2d4d2" /></g>
            <path d="M290 450 330 430 340 470 310 480z M440 410 455 402 455 440 442 445z M410 345 430 350 450 380 430 382z" fill="#f3ebdf" />
            <path d="M85 580 120 562 160 575 200 605 190 608 150 588 110 578z M490 410 510 425 540 465 545 485 520 460z M520 1270 528 1290 545 1335 535 1340 520 1310z M240 670 255 690 248 690z" fill="#fff" />
            <path d="M430 720 450 712 455 722z M452 725 460 722 456 750 450 745z M465 722 485 728 475 748z M478 750 500 740 490 750z M270 560 310 575 295 580z M380 660 385 650 395 690z M260 530 275 520 270 532z" fill={sea} />
            <path d={westBorders} fill="none" stroke="#8a9d97" strokeWidth="2" strokeDasharray="7 3" />
          </g>
        </g>
        <g filter="url(#coast)">
          <path d={antarctica} fill="#fcf9f5" />
          <path d="M930 1570 940 1575 920 1620 912 1640z M905 1660 918 1680 895 1730 880 1760 892 1790 900 1750z M1625 1540 1635 1545 1632 1610 1618 1620z M1505 1675 1515 1730 1500 1720z" fill="#e9ebec" />
          <path d="M1530 1722 1537 1728 1534 1735z M1802 1745 1806 1748 1796 1758z M1556 1655 1562 1660z" fill={sea} />
        </g>
        <g fill="none" stroke="#6f8c98" strokeWidth="3" strokeDasharray="10 4">
          <path d="M18 999H2200" />
          <path d="M1005 30V380L1063 495V532L952 663 1005 708V1008H1112V990H1095V970H1133L1170 1062H1145V1043H1065L1052 1058V1080L1045 1090V1265L1005 1315V1800" />
        </g>
      </g>

      {[0, 640].map(dx => (
        <g key={dx} transform={`translate(${dx})`}>
          {places.map(([x, y, name]) => <PlaceText key={name} x={x} y={y}>{name}</PlaceText>)}
          <use href="#bubbles" />
        </g>
      ))}
      {westPlaces.map(([x, y, name]) => <PlaceText key={name} x={x} y={y}>{name}</PlaceText>)}
      <circle cx="528" cy="402" r="5" fill="#3a7d72" fillOpacity="0.7" />
      <circle cx="542" cy="408" r="4" fill="#3a7d72" fillOpacity="0.7" />
      {oceans.map(([x, y, lines]) => (
        <OceanText key={x} y={y}>
          {lines.map((line, i) => <tspan key={line} x={x} dy={i && 8}>{line}</tspan>)}
        </OceanText>
      ))}
      <OceanText x="54" y="552" fontStyle="italic" $land>ANTARCTICA</OceanText>
      <OceanText x="694" y="552" fontStyle="italic" $land>ANTARCTICA</OceanText>
    </MapSvg>

    <GoogleMark>Google</GoogleMark>
    <MapControls>
      <RoundControl aria-label="Map camera controls">
        <svg width="15" height="15" viewBox="0 0 15 15" fill="none" stroke="#444" strokeWidth="1.500">
          <path d="M5.500 3l2-2 2 2M5.500 12l2 2 2-2M3 5.500l-2 2 2 2M12 5.500l2 2-2 2" />
        </svg>
      </RoundControl>
      <ZoomControl>
        <ZoomButton aria-label="Zoom in"><Plus size={14} strokeWidth={2.500} /></ZoomButton>
        <ZoomButton aria-label="Zoom out"><Minus size={14} strokeWidth={2.500} /></ZoomButton>
      </ZoomControl>
    </MapControls>
    <MapFooter>
      <a href="#shortcuts">Keyboard shortcuts</a>
      <span>Map data ©2025</span>
      <a href="#terms">Terms</a>
    </MapFooter>
  </MapPanel>
)

const inventory = [
  { name: "Argentina", cost: 10, tariff: 1 },
  { name: "Australia", cost: 16, label: "$1M" },
  { name: "Chile", cost: 12, tariff: 1 },
  { name: "China", cost: 147, label: "$6M", tariff: 52, tariffLabel: "$2M" },
  { name: "Congo", cost: 10, tariff: 1 },
  { name: "European Union", cost: 20, label: "$1M", tariff: 1 },
  { name: "Norway", cost: 16, label: "$1M", tariff: 1 },
  { name: "Canada", cost: 19, label: "$1M" },
  { name: "South Korea", cost: 17, label: "$1M", tariff: 3 },
  { name: "Taiwan", cost: 17, label: "$1M", tariff: 3 },
  { name: "USA", cost: 64, label: "$3M" },
  { name: "India", cost: 54, label: "$2M", tariff: 9 },
  { name: "Germany", cost: 68, label: "$3M", tariff: 2 },
  { name: "Japan", cost: 49, label: "$2M", tariff: 2 },
  { name: "Singapore", cost: 7 },
  { name: "France", cost: 15 },
  { name: "United Kingdom", cost: 17, label: "$1M", tariff: 1 },
  { name: "Belgium", cost: 1 },
]

const tariffs = [
  ["Argentina", 4, 15], ["Australia", 3, 20], ["Chile", 5, 50], ["China", 36, 50], ["Congo", 4, 21],
  ["European Union", 4, 30], ["Norway", 3, 25], ["Canada", 0, 25], ["South Korea", 18, 35], ["Taiwan", 22, 42],
]

const ChartAxis = ({ names, stagger }) => (
  <>
    <Axis>{names.map(name => <Tick key={name} />)}</Axis>
    <AxisLabels>
      {names.map(name => <AxisLabel key={name} $stagger={stagger}>{name}</AxisLabel>)}
    </AxisLabels>
  </>
)

const InventoryChart = () => (
  <ChartSection $right={21}>
    <ChartArea $height={227}>
      <Legend $gap={10} $top={18} $right={93}>
        <LegendItem $color={yellow}>Inventory Cost</LegendItem>
        <LegendItem $color={blue}>Current Tariff</LegendItem>
      </Legend>
      <Plot>
        {inventory.map(item => (
          <Column key={item.name}>
            <Stack>
              {item.tariff && (
                <Segment $color={item.tariff > 1 ? blue : "#a3ac80"} style={{ height: item.tariff }}>{item.tariffLabel}</Segment>
              )}
              <Segment $color={yellow} style={{ height: item.cost }}>{item.label}</Segment>
            </Stack>
          </Column>
        ))}
      </Plot>
    </ChartArea>
    <ChartAxis names={inventory.map(item => item.name)} stagger />
  </ChartSection>
)

const Rate = ({ value, color }) => (
  <Series>
    {value > 0 && <span>{value}%</span>}
    <Bar $color={color} style={{ height: Math.round(value * 4.35) }} />
  </Series>
)

const TariffChart = () => (
  <ChartSection>
    <ChartArea $height={284}>
      <ChartHead>
        <Selector>
          <SelectorButton $active>US</SelectorButton>
          <SelectorButton>CA</SelectorButton>
        </Selector>
        <Country>USA</Country>
      </ChartHead>
      <Legend $gap={19} $top={24} $right={87}>
        <LegendItem $color={blue}>Current Tariff</LegendItem>
        <LegendItem $color={orange}>Proposed Tariff</LegendItem>
      </Legend>
      <Plot>
        {tariffs.map(([name, current, proposed]) => (
          <Column key={name}>
            <Rate value={current} color={blue} />
            <Rate value={proposed} color={orange} />
          </Column>
        ))}
      </Plot>
    </ChartArea>
    <ChartAxis names={tariffs.map(([name]) => name)} />
  </ChartSection>
)

const App = () => {
  return (
    <Page>
      <GlobalStyle />
      <Browser />

      <AppFrame>
        <Header />

        <Scroller>
          <Screen>
            <Banner>
              <BannerTitle>Board on Tariffs</BannerTitle>
              <svg width="11" height="21" viewBox="0 0 11 21" fill="none" stroke="#fff">
                <path d="M.5 .5l9.500 10L.5 20.500" />
              </svg>
              <BannerPage>Tariff Dashboard</BannerPage>
              <BannerArt width="500" viewBox="0 0 500 57">
                <path d="M0 57Q14 24 31 0H500V57z" fill="#17a697" />
                <path d="M57 57Q85 20 112 0H145V57z" fill="#139a9f" />
                <path d="M74 57Q98 22 129 0H433Q470 24 500 57z" fill="#36e3b5" />
                <path d="M79 57Q108 22 143 0H433Q470 24 500 55V57z" fill="#24599a" />
                <path d="M330 0H433Q470 24 500 55V57H424Z" fill="#2666a5" />
                <path d="M101 57Q170 3 265 2T424 57z" fill="#1b55a9" />
                <path d="M115 57Q180 8 265 8T413 57z" fill="#3b3a96" />
                <path d="M115 57Q145 34 185 22L300 57z" fill="#2a3d88" />
                <path d="M433 0H473L500 21V53Q470 20 433 0z" fill="#36e8bb" />
                <path d="M473 0H500V21Q487 9 473 0z" fill="#109c9f" />
              </BannerArt>
            </Banner>

            <Nav>
              <House size={18} strokeWidth={1.200} color="#333" />
              <NavList>
                {navItems.map(item => <NavItem key={item}><a href="#">{item}</a></NavItem>)}
              </NavList>
            </Nav>

            <Content>
              <WorldMap />
              <Charts>
                <InventoryChart />
                <TariffChart />
              </Charts>
            </Content>
          </Screen>

          <Scrollbar>
            <svg width="6" height="4" viewBox="0 0 6 4"><path d="M0 4l3-4 3 4z" fill="#c4c4c4" /></svg>
            <ScrollThumb />
            <svg width="6" height="4" viewBox="0 0 6 4"><path d="M0 0l3 4 3-4z" fill="#c4c4c4" /></svg>
          </Scrollbar>
        </Scroller>
      </AppFrame>
    </Page>
  )
}

export default App
